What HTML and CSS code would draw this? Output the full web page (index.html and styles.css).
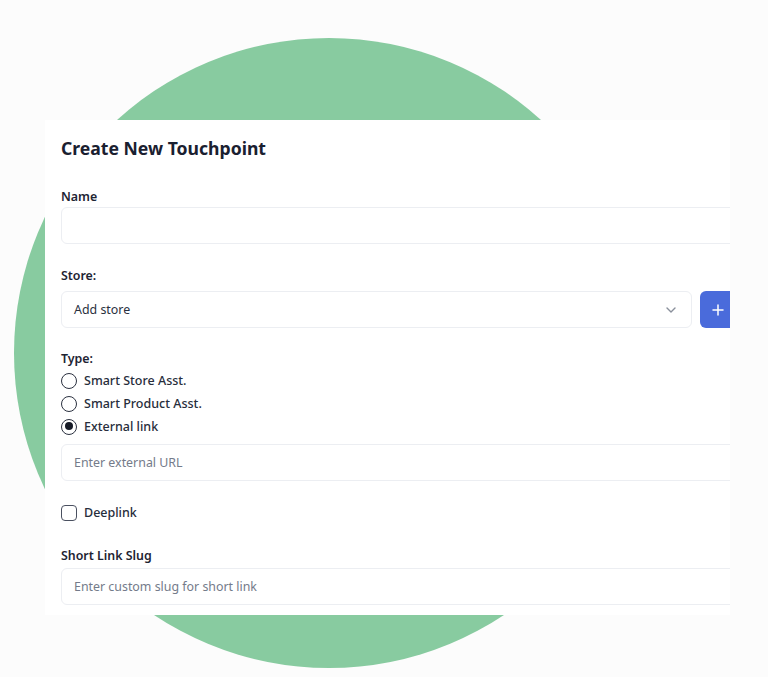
FILE: index.html
```html
<!DOCTYPE html>
<html lang="en">

<head>
    <meta charset="UTF-8">
    <meta name="viewport" content="width=device-width, initial-scale=1.0">
    <title>Create New Touchpoint</title>

    <link rel="stylesheet" href="styles.css">
</head>

<body>
    <div class="blob"></div>

    <div class="card">
        <div class="form">
            <h2 class="title">Create New Touchpoint</h2>

            <label class="label label-name" for="name">Name</label>
            <input id="name" class="field" type="text">

            <label class="label label-store">Store:</label>
            <div class="store-row">
                <div class="field select">
                    <span>Add store</span>
                    <svg width="10" height="6" viewBox="0 0 10 6" fill="none">
                        <path d="M1 1l4 4 4-4" stroke="#8a909c" stroke-width="1.4" stroke-linecap="round" stroke-linejoin="round" />
                    </svg>
                </div>
                <button class="add-btn">
                    <svg width="12" height="12" viewBox="0 0 12 12">
                        <path d="M6 1v10M1 6h10" stroke="#fff" stroke-width="1.5" stroke-linecap="round" />
                    </svg>
                </button>
            </div>

            <div class="label label-type">Type:</div>
            <div class="radio-list">
                <div class="radio-row"><span class="radio"></span>Smart Store Asst.</div>
                <div class="radio-row"><span class="radio"></span>Smart Product Asst.</div>
                <div class="radio-row"><span class="radio checked"></span>External link</div>
            </div>
            <input class="field field-url" type="text" placeholder="Enter external URL">

            <div class="check-row"><span class="checkbox"></span>Deeplink</div>

            <label class="label label-slug" for="slug">Short Link Slug</label>
            <input id="slug" class="field" type="text" placeholder="Enter custom slug for short link">
        </div>
    </div>
</body>

</html>
```

FILE: styles.css
```css
* {
    margin: 0;
    padding: 0;
    box-sizing: border-box;
}

body {
    background-color: #fcfcfc;
    font-family: "Noto Sans", "Open Sans", sans-serif;
    color: #1e2433;
    width: 768px;
    height: 677px;
    overflow: hidden;
    position: relative;
}

/* green circle behind the dialog */
.blob {
    position: absolute;
    left: 14px;
    top: 38px;
    width: 630px;
    height: 630px;
    border-radius: 50%;
    background-color: #88cba0;
}

.card {
    position: relative;
    margin-top: 120px;
    margin-left: 45px;
    width: 685px;
    height: 495px;
    background-color: #fff;
    overflow: hidden;
    padding: 15px 0 0 16px;
}

.form {
    width: 679px;
    display: flex;
    flex-direction: column;
}

.title {
    font-size: 17.6px;
    line-height: 26px;
    font-weight: 700;
    color: #1a2030;
}

.label {
    display: block;
    font-size: 12.4px;
    line-height: 18px;
    font-weight: 600;
    color: #1e2433;
}

.label-name {
    margin-top: 27px;
    margin-bottom: 1px;
}

.label-store {
    margin-top: 23px;
    margin-bottom: 6px;
}

.label-type {
    margin-top: 22px;
}

.label-slug {
    margin-top: 23px;
    margin-bottom: 3px;
}

.field {
    height: 37px;
    width: 100%;
    border: 1px solid #eceef2;
    border-radius: 6px;
    background-color: #fff;
    padding: 0 12px;
    font-family: inherit;
    font-size: 12.4px;
    color: #2a3040;
    outline: none;
}

.field::placeholder {
    color: #747b8a;
}

.store-row {
    display: flex;
    gap: 8px;
}

.select {
    flex: 1;
    display: flex;
    align-items: center;
    justify-content: space-between;
    padding-right: 15px;
}

.add-btn {
    width: 40px;
    height: 37px;
    flex-shrink: 0;
    border: none;
    border-radius: 6px;
    background-color: #4a6bdb;
    display: flex;
    align-items: center;
    justify-content: center;
    padding-right: 4px;
}

.radio-list {
    margin-top: 1px;
}

.radio-row,
.check-row {
    display: flex;
    align-items: center;
    gap: 7px;
    height: 23px;
    font-size: 12.5px;
    font-weight: 500;
    color: #272d3b;
}

.radio {
    width: 16px;
    height: 16px;
    border-radius: 50%;
    border: 1.5px solid #2b3140;
    position: relative;
}

.radio.checked::after {
    content: "";
    position: absolute;
    left: 2.5px;
    top: 2.5px;
    width: 8px;
    height: 8px;
    border-radius: 50%;
    background-color: #151a26;
}

.field-url {
    margin-top: 6px;
}

.check-row {
    margin-top: 20px;
}

.checkbox {
    width: 16px;
    height: 16px;
    border-radius: 4px;
    border: 1.5px solid #4a5060;
}
```
